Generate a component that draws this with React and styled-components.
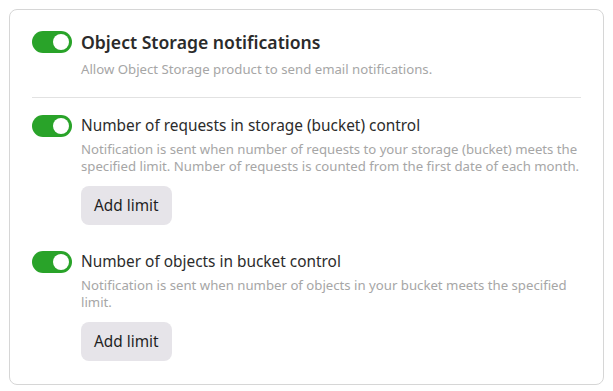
import React from 'react';
import styled, { createGlobalStyle } from 'styled-components';

const GlobalStyle = createGlobalStyle`
  body {
    margin: 9px;
    background: #ffffff;
    font-family: 'Noto Sans', 'Open Sans', sans-serif;
  }
`;

const Card = styled.section`
  border: 1px solid #d6d6d6;
  border-radius: 8px;
  padding: 21px 22px 23px 22px;
  display: flex;
  flex-direction: column;
`;

const Item = styled.div`
  display: grid;
  grid-template-columns: 40px 1fr;
  column-gap: 9px;
  margin-top: ${p => p.$top || 0}px;
`;

const Toggle = styled.button`
  width: 40px;
  height: 22px;
  border: none;
  padding: 0;
  border-radius: 11px;
  background: ${p => (p.$on ? '#29a329' : '#c8c8c8')};
  position: relative;
  cursor: pointer;
  &::after {
    content: '';
    position: absolute;
    top: 3px;
    left: ${p => (p.$on ? '21px' : '3px')};
    width: 16px;
    height: 16px;
    border-radius: 50%;
    background: #fff;
  }
`;

const Body = styled.div`
  display: flex;
  flex-direction: column;
  align-items: flex-start;
`;

const Title = styled.div`
  line-height: 22px;
  font-size: ${p => (p.$main ? '17.6px' : '15.4px')};
  font-weight: ${p => (p.$main ? 600 : 400)};
  color: #2b2b2b;
`;

const Desc = styled.p`
  margin: ${p => p.$gap || 4}px 0 0;
  font-size: 13.2px;
  line-height: 17px;
  color: #a6a6a6;
`;

const Divider = styled.hr`
  border: none;
  border-top: 1px solid #e2e2e2;
  margin: 19px 0 0;
  width: 100%;
`;

const LimitButton = styled.button`
  margin-top: 11px;
  height: 39px;
  padding: 0 13px;
  border: none;
  border-radius: 8px;
  background: #e6e4e9;
  color: #1f1f1f;
  font-family: inherit;
  font-size: 15.4px;
  cursor: pointer;
`;

function Setting({ title, text, top }) {
  const [on, setOn] = React.useState(true);
  return (
    <Item $top={top}>
      <Toggle $on={on} onClick={() => setOn(!on)} aria-label={title} />
      <Body>
        <Title>{title}</Title>
        <Desc>{text}</Desc>
        <LimitButton>Add limit</LimitButton>
      </Body>
    </Item>
  );
}

function App() {
  const [enabled, setEnabled] = React.useState(true);

  return (
    <>
      <GlobalStyle />
      <Card>
        <Item>
          <Toggle $on={enabled} onClick={() => setEnabled(!enabled)} aria-label="Object Storage notifications" />
          <Body>
            <Title $main>Object Storage notifications</Title>
            <Desc $gap={8}>Allow Object Storage product to send email notifications.</Desc>
          </Body>
        </Item>
        <Divider />
        <Setting
          top={17}
          title="Number of requests in storage (bucket) control"
          text="Notification is sent when number of requests to your storage (bucket) meets the specified limit. Number of requests is counted from the first date of each month."
        />
        <Setting
          top={26}
          title="Number of objects in bucket control"
          text="Notification is sent when number of objects in your bucket meets the specified limit."
        />
      </Card>
    </>
  );
}

export default App;
